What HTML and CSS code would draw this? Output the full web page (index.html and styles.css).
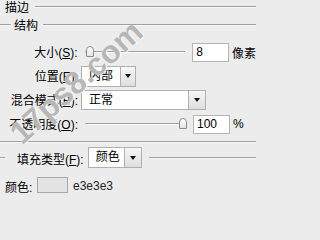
FILE: index.html
```html
<!DOCTYPE html>
<html lang="zh-CN">
<head>
<meta charset="utf-8">
<title>描边</title>
<link rel="stylesheet" href="styles.css">
</head>
<body>
<div class="dialog">
  <div class="legend legend-main">
    <span class="legend-text">描边</span>
    <span class="rule"></span>
  </div>
  <div class="legend legend-sub">
    <span class="rule rule-lead"></span>
    <span class="legend-text">结构</span>
    <span class="rule"></span>
  </div>

  <div class="rows">
    <div class="row">
      <span class="lbl">大小(<u>S</u>):</span>
      <div class="slider">
        <span class="track"></span>
        <span class="thumb" style="left:2px"></span>
      </div>
      <span class="field">8</span>
      <span class="unit">像素</span>
    </div>
    <div class="row">
      <span class="lbl">位置(<u>E</u>):</span>
      <div class="combo combo-pos">
        <span class="combo-text">内部</span>
        <span class="combo-btn"><span class="arrow"></span></span>
      </div>
    </div>
    <div class="row">
      <span class="lbl">混合模式(<u>B</u>):</span>
      <div class="combo combo-blend">
        <span class="combo-text">正常</span>
        <span class="combo-btn combo-btn-wide"><span class="arrow"></span></span>
      </div>
    </div>
    <div class="row">
      <span class="lbl">不透明度(<u>O</u>):</span>
      <div class="slider">
        <span class="track"></span>
        <span class="thumb" style="left:95px"></span>
      </div>
      <span class="field">100</span>
      <span class="unit">%</span>
    </div>
  </div>

  <div class="sep"></div>

  <div class="legend legend-fill">
    <span class="rule rule-short"></span>
    <span class="fill-label">填充类型(<u>F</u>):</span>
    <div class="combo combo-fill">
      <span class="combo-text">颜色</span>
      <span class="combo-btn combo-btn-wide"><span class="arrow"></span></span>
    </div>
    <span class="rule rule-after"></span>
  </div>

  <div class="color-row">
    <span class="color-label">颜色:</span>
    <span class="swatch"></span>
    <span class="hex">e3e3e3</span>
  </div>

  <div class="watermark">17ps8.com</div>
</div>
</body>
</html>
```

FILE: styles.css
```css
html, body {
  margin: 0;
  padding: 0;
  background: #ececec;
}

body {
  font-family: "Liberation Sans", "Noto Sans CJK SC", sans-serif;
  font-size: 12px;
  color: #000;
}

.dialog {
  position: relative;
  width: 256px;
  height: 201px;
  overflow: hidden;
  background: #ececec;
}

u {
  text-decoration: underline;
  text-underline-offset: 1px;
}

/* group headers */
.legend {
  display: flex;
  align-items: center;
  height: 14px;
}

.legend-main {
  padding-left: 5px;
}

.legend-main .legend-text {
  margin-right: 6px;
}

.legend-sub {
  margin-top: 4px;
}

.legend-sub .legend-text {
  margin: 0 5px 0 3px;
}

.legend-text {
  padding-top: 2px;
  line-height: 14px;
  white-space: nowrap;
}

.rule {
  flex: 1;
  height: 0;
  border-top: 1px solid #a0a0a0;
  border-bottom: 1px solid #f8f8f8;
}

.rule-lead {
  flex: 0 0 11px;
}

/* form rows */
.rows {
  margin-top: 8px;
}

.row {
  display: flex;
  align-items: center;
  height: 24px;
}

.lbl {
  width: 78px;
  padding-top: 1px;
  text-align: right;
  white-space: nowrap;
  line-height: 14px;
}

.slider {
  position: relative;
  display: flex;
  align-items: center;
  width: 105px;
  height: 14px;
  margin-left: 6px;
}

.track {
  flex: 1;
  margin: 0 3px 0 1px;
  height: 0;
  border-top: 1px solid #a0a0a0;
  border-bottom: 1px solid #fafafa;
}

.thumb {
  position: absolute;
  top: 1px;
  width: 8px;
  height: 11px;
  box-sizing: border-box;
  border: 1px solid #8c8c8c;
  border-radius: 4px 4px 1px 1px;
  background: linear-gradient(#ffffff, #e2e2e2);
}

.field {
  box-sizing: border-box;
  width: 37px;
  height: 19px;
  margin-left: 4px;
  padding-left: 3px;
  border: 1px solid #b4b4b4;
  background: #fff;
  line-height: 17px;
}

.unit {
  margin-left: 3px;
  white-space: nowrap;
}

.combo {
  display: flex;
  box-sizing: border-box;
  height: 21px;
  margin-left: 3px;
  border: 1px solid #b0b0b0;
  background: #fff;
}

.combo-pos {
  width: 55px;
}

.combo-blend {
  width: 125px;
  height: 20px;
}

.combo-text {
  flex: 1;
  padding-left: 7px;
  line-height: 19px;
  white-space: nowrap;
}

.combo-btn {
  display: flex;
  align-items: center;
  justify-content: center;
  width: 14px;
  border-left: 1px solid #b0b0b0;
  background: linear-gradient(#f6f6f6, #dedede);
}

.combo-btn-wide {
  width: 16px;
}

.arrow {
  width: 0;
  height: 0;
  border-left: 3.5px solid transparent;
  border-right: 3.5px solid transparent;
  border-top: 4px solid #111;
}

.sep {
  margin-top: 5px;
  height: 0;
  border-top: 1px solid #a0a0a0;
  border-bottom: 1px solid #f8f8f8;
}

.legend-fill {
  height: 21px;
  margin-top: 4px;
}

.rule-short {
  flex: 0 0 5px;
}

.fill-label {
  margin-left: 12px;
  padding-top: 1px;
  white-space: nowrap;
}

.combo-fill {
  width: 54px;
  margin-left: 4px;
}

.rule-after {
  margin-left: 7px;
}

.color-row {
  display: flex;
  align-items: center;
  height: 16px;
  margin-top: 9px;
  padding-left: 5px;
}

.color-label {
  width: 32px;
  padding-top: 2px;
  white-space: nowrap;
}

.swatch {
  box-sizing: border-box;
  width: 31px;
  height: 16px;
  border: 1px solid #a8a8a8;
  background: #e3e3e3;
}

.hex {
  margin-left: 5px;
  padding-top: 2px;
  color: #222;
}

/* diagonal watermark over the dialog */
.watermark {
  position: absolute;
  left: 76px;
  top: 82px;
  transform: translate(-50%, -50%) rotate(-42deg);
  font-family: "Liberation Sans", sans-serif;
  font-weight: bold;
  font-size: 32px;
  line-height: 1;
  white-space: nowrap;
  color: rgba(135, 135, 135, 0.6);
  text-shadow: 0 0 1px #fff, 1px 1px 0 rgba(255, 255, 255, 0.8);
  pointer-events: none;
}
```
